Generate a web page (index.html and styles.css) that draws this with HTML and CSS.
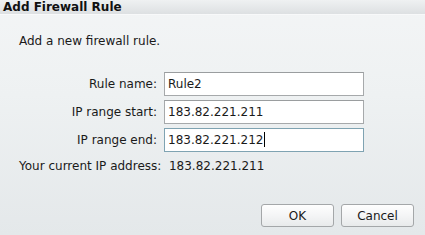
FILE: index.html
```html
<!DOCTYPE html>
<html>
<head>
<meta charset="utf-8">
<link rel="stylesheet" href="styles.css">
</head>
<body>
<div class="dialog">
  <div class="titlebar">Add Firewall Rule</div>
  <div class="content">
    <p class="intro">Add a new firewall rule.</p>
    <div class="form">
      <label class="lbl">Rule name:</label>
      <div class="field">Rule2</div>
      <label class="lbl">IP range start:</label>
      <div class="field">183.82.221.211</div>
      <label class="lbl">IP range end:</label>
      <div class="field focused">183.82.221.212<span class="caret"></span></div>
    </div>
    <p class="current">Your current IP address:&nbsp; 183.82.221.211</p>
  </div>
  <div class="buttons">
    <button class="btn">OK</button>
    <button class="btn">Cancel</button>
  </div>
</div>
</body>
</html>
```
FILE: styles.css
```css
html, body {
  margin: 0;
  padding: 0;
}
body {
  width: 425px;
  height: 235px;
  overflow: hidden;
  font-family: "DejaVu Sans", Tahoma, sans-serif;
  font-size: 12px;
  color: #1a1a1a;
}
.dialog {
  width: 425px;
  height: 235px;
  display: flex;
  flex-direction: column;
  background: linear-gradient(to bottom, #f3f5f6 0%, #eef1f2 40%, #e4e8ea 100%);
}
.titlebar {
  height: 14px;
  line-height: 14px;
  padding-left: 3px;
  font-weight: bold;
  font-size: 12px;
  color: #111;
  background: linear-gradient(to bottom, #eff1f2, #dde0e2);
  border-bottom: 1px solid #f8f9fa;
}
.content {
  padding: 0 0 0 19px;
  flex: 1;
}
.intro {
  margin: 19px 0 0 0;
  line-height: 14px;
}
.form {
  display: grid;
  grid-template-columns: 138px 200px;
  column-gap: 7px;
  row-gap: 4px;
  margin-top: 24px;
}
.lbl {
  text-align: right;
  line-height: 24px;
  height: 24px;
}
.field {
  box-sizing: border-box;
  height: 24px;
  line-height: 22px;
  border: 1px solid #a6a9ab;
  border-top-color: #9a9d9f;
  background: #fff;
  padding-left: 3px;
}
.field.focused {
  border-color: #7fa3b2;
}
.caret {
  display: inline-block;
  width: 1px;
  height: 15px;
  background: #000;
  vertical-align: -3px;
  margin-left: 1px;
}
.current {
  margin: 7px 0 0 0;
  line-height: 14px;
}
.buttons {
  display: flex;
  justify-content: flex-end;
  gap: 7px;
  padding: 0 11px 8px 0;
}
.btn {
  width: 73px;
  height: 23px;
  font-family: inherit;
  font-size: 12px;
  color: #1a1a1a;
  border: 1px solid #a4a7a9;
  border-radius: 3px;
  background: linear-gradient(to bottom, #fefefe 0%, #f4f5f6 50%, #e8eaeb 100%);
  padding: 0;
}
```
